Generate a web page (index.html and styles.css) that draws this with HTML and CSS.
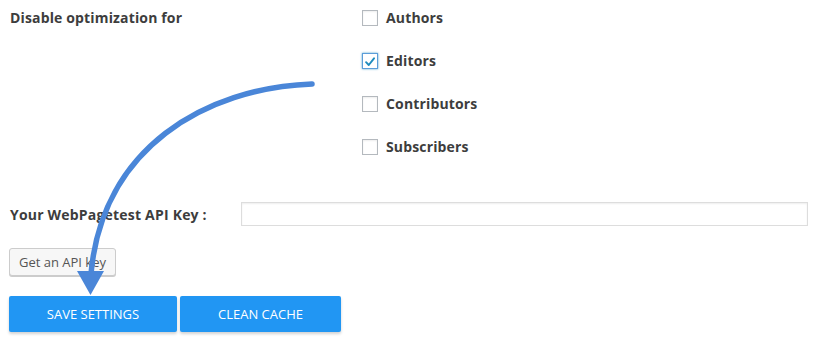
FILE: index.html
```html
<!DOCTYPE html>
<html>
<head>
<meta charset="utf-8">
<link rel="stylesheet" href="styles.css">
</head>
<body>
<div class="page">
  <div class="row roles">
    <div class="row-label">Disable optimization for</div>
    <ul class="checklist">
      <li class="check-item"><span class="box"></span><span class="check-label">Authors</span></li>
      <li class="check-item"><span class="box checked"><svg viewBox="0 0 16 16" width="16" height="16"><path d="M3.5 8.2 L6.6 11.4 L12.6 3.8" fill="none" stroke="#1e8cbe" stroke-width="2.2" stroke-linecap="round" stroke-linejoin="round"/></svg></span><span class="check-label">Editors</span></li>
      <li class="check-item"><span class="box"></span><span class="check-label">Contributors</span></li>
      <li class="check-item"><span class="box"></span><span class="check-label">Subscribers</span></li>
    </ul>
  </div>
  <div class="row api">
    <div class="api-label">Your WebPagetest API Key :</div>
    <div class="api-input"></div>
  </div>
  <div class="row getkey">
    <span class="btn-secondary">Get an API key</span>
  </div>
  <div class="row actions">
    <span class="btn-primary save">SAVE SETTINGS</span>
    <span class="btn-primary clean">CLEAN CACHE</span>
  </div>
  <svg class="arrow" width="830" height="341" viewBox="0 0 830 341">
    <path d="M312 84 C 205 88, 102 148, 91 274" fill="none" stroke="#4a86d8" stroke-width="5.5" stroke-linecap="round"/>
    <path d="M77 271 L104 271 L90.5 295 Z" fill="#4a86d8"/>
  </svg>
</div>
</body>
</html>
```
FILE: styles.css
```css
html, body {
  margin: 0;
  padding: 0;
  background: #ffffff;
}
.page {
  position: relative;
  width: 830px;
  height: 341px;
  padding-left: 9px;
  box-sizing: border-box;
  font-family: "Open Sans", "DejaVu Sans", sans-serif;
  color: #3d3d3d;
}
.row {
  display: flex;
}
.roles {
  padding-top: 8px;
}
.row-label {
  width: 352px;
  padding-left: 1px;
  font-size: 14px;
  font-weight: 700;
  line-height: 20px;
  letter-spacing: 0.15px;
}
.checklist {
  list-style: none;
  margin: 0;
  padding: 0;
  display: flex;
  flex-direction: column;
  gap: 23px;
}
.check-item {
  display: flex;
  align-items: center;
  height: 20px;
}
.box {
  width: 16px;
  height: 16px;
  box-sizing: border-box;
  border: 1px solid #b4b9be;
  background: #fff;
  box-shadow: inset 0 1px 2px rgba(0,0,0,0.07);
  margin-right: 8px;
  display: flex;
}
.box.checked {
  border-color: #5b9dd9;
  box-shadow: 0 0 2px rgba(30,140,190,0.8);
}
.check-label {
  font-size: 14px;
  font-weight: 700;
  line-height: 20px;
  letter-spacing: 0.15px;
}
.api {
  margin-top: 44px;
  align-items: center;
  height: 26px;
}
.api-label {
  width: 231px;
  padding-left: 1px;
  font-size: 14px;
  font-weight: 700;
  letter-spacing: 0.2px;
  white-space: nowrap;
}
.api-input {
  width: 567px;
  height: 24px;
  box-sizing: border-box;
  border: 1px solid #dddddd;
  box-shadow: inset 0 1px 2px rgba(0,0,0,0.07);
  background: #fff;
}
.getkey {
  margin-top: 21px;
}
.btn-secondary {
  display: inline-flex;
  align-items: center;
  justify-content: center;
  height: 28px;
  width: 107px;
  box-sizing: border-box;
  padding: 0;
  border: 1px solid #cccccc;
  border-radius: 3px;
  background: #f7f7f7;
  box-shadow: 0 1px 0 #cccccc;
  font-size: 13px;
  color: #555555;
  white-space: nowrap;
}
.actions {
  margin-top: 20px;
  gap: 3px;
}
.btn-primary {
  display: inline-flex;
  align-items: center;
  justify-content: center;
  height: 36px;
  background: #2196f3;
  color: #ffffff;
  font-size: 13px;
  border-radius: 2px;
  box-shadow: 0 2px 3px rgba(0,0,0,0.18);
  white-space: nowrap;
}
.save {
  width: 168px;
}
.clean {
  width: 161px;
}
.arrow {
  position: absolute;
  left: 0;
  top: 0;
  pointer-events: none;
}
```
